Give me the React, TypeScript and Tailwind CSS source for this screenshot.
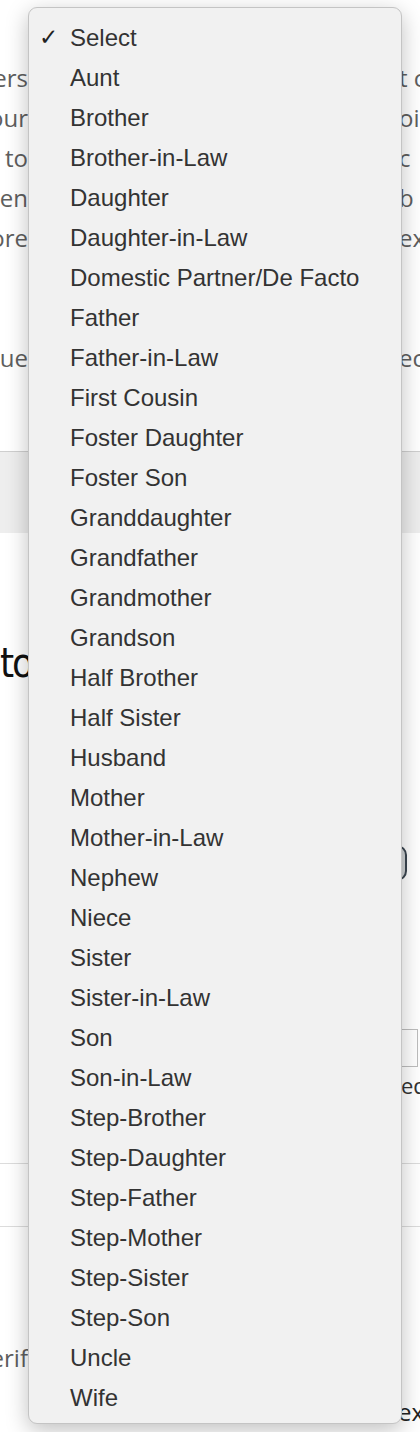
import React from "react"

const options = [
  "Select",
  "Aunt",
  "Brother",
  "Brother-in-Law",
  "Daughter",
  "Daughter-in-Law",
  "Domestic Partner/De Facto",
  "Father",
  "Father-in-Law",
  "First Cousin",
  "Foster Daughter",
  "Foster Son",
  "Granddaughter",
  "Grandfather",
  "Grandmother",
  "Grandson",
  "Half Brother",
  "Half Sister",
  "Husband",
  "Mother",
  "Mother-in-Law",
  "Nephew",
  "Niece",
  "Sister",
  "Sister-in-Law",
  "Son",
  "Son-in-Law",
  "Step-Brother",
  "Step-Daughter",
  "Step-Father",
  "Step-Mother",
  "Step-Sister",
  "Step-Son",
  "Uncle",
  "Wife",
]

// text line of the page behind the popup, only its two ends show
function Line({ left, right }: { left?: string; right?: string }) {
  return (
    <div className="flex h-[40px] items-center justify-between text-[24px] text-[#5e5e5e]">
      <div className="flex w-[28px] justify-end overflow-hidden whitespace-nowrap">{left}</div>
      <div className="w-[22px] overflow-hidden whitespace-nowrap pl-[1px]">{right}</div>
    </div>
  )
}

export default function App() {
  const selected = "Select"

  return (
    <div className="relative h-[1432px] w-[420px] overflow-hidden bg-white font-['Open_Sans',sans-serif]">
      {/* Page behind */}
      <div className="flex flex-col">
        <div className="h-[58px]" />
        <Line left="Answers" right="t co" />
        <Line left="your" right="oint" />
        <Line left="to" right="c" />
        <Line left="children" right="b" />
        <Line left="before" right="ext" />
        <Line />
        <Line />
        <Line left="value" right="ec" />
        <div className="h-[73px]" />
        <div className="h-[82px] border-t border-[#cfcfcf] bg-[#eeeeee]" />
        <div className="h-[105px]" />
        <div className="flex h-[50px] items-center justify-start">
          <div className="flex w-[28px] justify-start overflow-hidden whitespace-nowrap font-['DejaVu_Sans_Condensed','Roboto',sans-serif] text-[40px] leading-none tracking-[-2px] text-[#111]">
            to
          </div>
        </div>
        <div className="h-[157px]" />
        <div className="flex h-[36px] justify-end pr-[13px]">
          <div className="w-[120px] rounded-[10px] border-2 border-[#3b4650] bg-[#cfd2d4]" />
        </div>
        <div className="h-[148px]" />
        <div className="flex h-[38px] justify-end pr-[2px]">
          <div className="w-[160px] border border-[#bdbdbd] bg-white" />
        </div>
        <div className="flex h-[36px] items-center overflow-hidden whitespace-nowrap pl-[401px] text-[22px] text-[#333]">
          edited
        </div>
        <div className="h-[60px]" />
        <div className="h-[63px] border-t border-[#dcdcdc]" />
        <div className="h-[112px] border-t border-[#dcdcdc]" />
        <Line left="Verif" />
        <div className="h-[14px]" />
        <div className="flex h-[40px] items-center justify-end overflow-hidden whitespace-nowrap pl-[401px] text-[24px] text-[#222]">
          <div className="w-[19px] overflow-hidden">
            <span className="relative left-[-3px]">ext</span>
          </div>
        </div>
        <div className="grid h-[20px] grid-cols-[155px_164px_1fr]">
          <div />
          <div className="border-l border-[#cfcfcf]" />
          <div className="border-l border-[#cfcfcf]" />
        </div>
      </div>

      {/* Native select popup */}
      <div className="absolute left-[28px] top-[7px] w-[374px] rounded-[9px] border border-[#c4c4c4] bg-[#f1f1f1] pb-[5px] pt-[10px] font-['Liberation_Sans',Arial,sans-serif] shadow-[0_6px_22px_rgba(0,0,0,0.25)]">
        {options.map((o) => (
          <div key={o} className="relative flex h-[40px] items-center pl-[41px] text-[24px] text-[#333]">
            {o === selected && (
              <span className="absolute left-[10px] top-[2px] font-['DejaVu_Sans',sans-serif] text-[23px] font-bold text-[#222]">
                ✓
              </span>
            )}
            {o}
          </div>
        ))}
      </div>
    </div>
  )
}
